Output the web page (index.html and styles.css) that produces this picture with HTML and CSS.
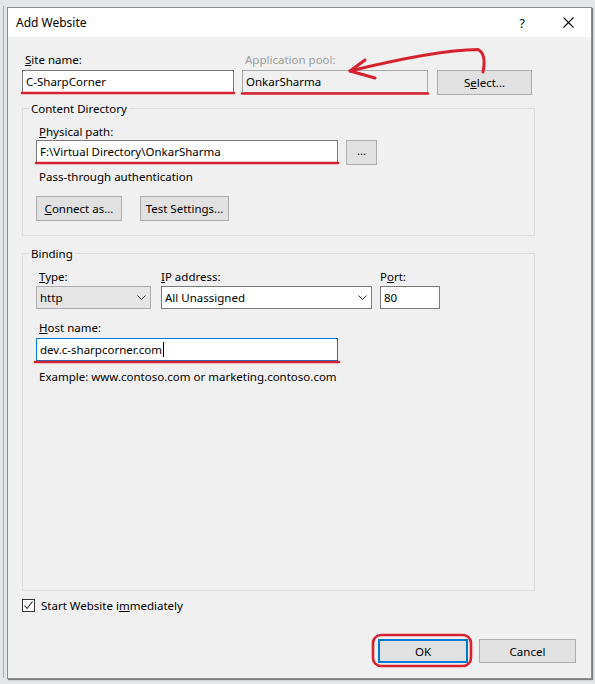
FILE: index.html
```html
<!DOCTYPE html>
<html lang="en">
<head>
<meta charset="utf-8">
<title>Add Website</title>
<link rel="stylesheet" href="styles.css">
</head>
<body>
<div class="backdrop-line"></div>
<div class="dialog">
  <div class="titlebar">
    <span class="title">Add Website</span>
    <span class="help">?</span>
    <svg class="close" width="11" height="11" viewBox="0 0 11 11"><path d="M0.5 0.5 L10.5 10.5 M10.5 0.5 L0.5 10.5" stroke="#000" stroke-width="1.1" fill="none"/></svg>
  </div>
  <div class="content">
    <div class="row1">
      <div class="lbl"><u>S</u>ite name:</div>
      <div class="lbl disabled">Application pool:</div>
      <div></div>
      <div class="field">C-SharpCorner</div>
      <div class="field readonly">OnkarSharma</div>
      <div class="btn">S<u>e</u>lect...</div>
    </div>

    <fieldset class="group content-dir">
      <legend>Content Directory</legend>
      <div class="lbl"><u>P</u>hysical path:</div>
      <div class="path-row">
        <div class="field path">F:\Virtual Directory\OnkarSharma</div>
        <div class="btn dots">...</div>
      </div>
      <div class="lbl note">Pass-through authentication</div>
      <div class="btn-row">
        <div class="btn connect"><u>C</u>onnect as...</div>
        <div class="btn test">Test Settings...</div>
      </div>
    </fieldset>

    <fieldset class="group binding">
      <legend>Binding</legend>
      <div class="bind-grid">
        <div class="lbl type-lbl"><u>T</u>ype:</div>
        <div class="lbl flush"><u>I</u>P address:</div>
        <div class="lbl flush">P<u>o</u>rt:</div>
        <div class="select grey"><span>http</span><svg width="9" height="5" viewBox="0 0 9 5"><path d="M0.5 0.5 L4.5 4.5 L8.5 0.5" stroke="#333" stroke-width="1" fill="none"/></svg></div>
        <div class="select"><span>All Unassigned</span><svg width="9" height="5" viewBox="0 0 9 5"><path d="M0.5 0.5 L4.5 4.5 L8.5 0.5" stroke="#333" stroke-width="1" fill="none"/></svg></div>
        <div class="field">80</div>
      </div>
      <div class="lbl host-lbl"><u>H</u>ost name:</div>
      <div class="field host focused">dev.c-sharpcorner.com<span class="caret"></span></div>
      <div class="lbl example">Example: www.contoso.com or marketing.contoso.com</div>
    </fieldset>

    <div class="check-row">
      <span class="checkbox"><svg width="11" height="11" viewBox="0 0 11 11"><path d="M1.5 5.5 L4 8.5 L9.5 1.5" stroke="#222" stroke-width="1.1" fill="none"/></svg></span>
      <span class="check-lbl">Start Website i<u>m</u>mediately</span>
    </div>

    <div class="actions">
      <div class="btn ok">OK</div>
      <div class="btn cancel">Cancel</div>
    </div>
  </div>
</div>

<svg class="annot" width="595" height="684" viewBox="0 0 595 684">
  <g stroke="#d6222e" fill="none" stroke-linecap="round" stroke-linejoin="round">
    <path d="M483 72 C485 62 485 53 478 49.5 C445 50 395 60 350 71" stroke-width="3"/>
    <path d="M365 60 L350 71 L375 78" stroke-width="3"/>
    <path d="M22 93 L234 93" stroke-width="2.6"/>
    <path d="M242 93.5 L428 93.5" stroke-width="2.6"/>
    <path d="M36 163 L338 163" stroke-width="2.6"/>
    <path d="M35 362 L339 362" stroke-width="2.6"/>
    <rect x="373" y="635" width="98" height="31" rx="8" ry="8" stroke-width="2.6"/>
  </g>
</svg>
</body>
</html>
```
FILE: styles.css
```css
* { box-sizing: border-box; }

html, body { margin: 0; padding: 0; }

body {
  position: relative;
  width: 595px;
  height: 684px;
  overflow: hidden;
  background: #e3e5e8;
  padding: 7px 3px 5px 7px;
  font-family: "Noto Sans", "Open Sans", sans-serif;
  font-size: 11.5px;
  color: #000;
}

.backdrop-line {
  position: absolute;
  left: 3px;
  top: 6px;
  width: 1px;
  height: 672px;
  background: #a9a9a9;
}

u { text-decoration: underline; text-underline-offset: 1px; }

.dialog {
  position: relative;
  width: 585px;
  height: 672px;
  border: 1px solid #8c8c8c;
  background: #f0f0f0;
  box-shadow: 1px 1px 1px rgba(0,0,0,.45);
  display: flex;
  flex-direction: column;
}

.titlebar {
  height: 29px;
  background: #fff;
  display: flex;
  align-items: center;
  padding-left: 8px;
  flex: none;
}
.title { font-size: 12px; flex: 1; }
.help { font-size: 13px; margin-right: 38px; }
.close { margin-right: 17px; }

.content {
  flex: 1;
  display: flex;
  flex-direction: column;
  padding: 15px 15px 15px 14px;
}

.lbl { line-height: 15px; height: 15px; padding-left: 3px; white-space: nowrap; }
.lbl.disabled { color: #9d9d9d; }
.lbl.flush { padding-left: 0; }

.row1 {
  display: grid;
  grid-template-columns: 212px 186px 96px;
  column-gap: 8px;
  row-gap: 3px;
}
.row1 > :nth-child(3n) { margin-left: 1px; }

.field {
  height: 23px;
  border: 1px solid #7a7a7a;
  background: #fff;
  padding-left: 3px;
  line-height: 21px;
  white-space: nowrap;
  overflow: hidden;
}
.field.readonly { background: #f0f0f0; border-color: #a8a8a8; }
.field.focused { border-color: #0078d7; }

.btn {
  height: 25px;
  border: 1px solid #adadad;
  background: #e1e1e1;
  display: flex;
  align-items: center;
  justify-content: center;
  white-space: nowrap;
}

.group {
  margin: 0;
  border: 1px solid #dcdcdc;
  padding: 0 0 0 13px;
  width: 513px;
  min-width: 0;
}
.group legend {
  padding: 0 2px;
  margin-left: -7px;
  line-height: 15px;
}

.content-dir { margin-top: 6px; padding-top: 8px; padding-bottom: 14px; }
.content-dir .lbl:first-of-type { margin-bottom: 1px; }

.path-row { display: flex; gap: 8px; align-items: flex-start; }
.field.path { width: 302px; }
.btn.dots { width: 31px; padding-bottom: 4px; }

.lbl.note { margin-top: 4px; }

.btn-row { display: flex; gap: 18px; margin-top: 12px; }
.btn.connect { width: 86px; }
.btn.test { width: 89px; }

.binding {
  margin-top: 10px;
  padding-top: 8px;
  flex: 1;
}

.bind-grid {
  display: grid;
  grid-template-columns: 115px 211px 58px;
  column-gap: 10px;
  row-gap: 2px;
}
.bind-grid > :nth-child(3n) { margin-left: -2px; }
.bind-grid .flush:first-of-type { padding-left: 0; }

.select {
  height: 23px;
  border: 1px solid #7a7a7a;
  background: #fff;
  display: flex;
  align-items: center;
  justify-content: space-between;
  padding: 0 4px 0 3px;
}
.select.grey { background: #e5e5e5; border-color: #acacac; }

.lbl.host-lbl { margin-top: 11px; margin-bottom: 3px; }
.field.host { width: 302px; display: flex; align-items: center; }
.caret { display: inline-block; width: 1px; height: 15px; background: #000; margin-left: 1px; }

.lbl.example { margin-top: 8px; }

.check-row {
  margin-top: 8px;
  height: 13px;
  display: flex;
  align-items: center;
  flex: none;
}
.checkbox {
  width: 13px;
  height: 13px;
  border: 1px solid #333;
  background: #fff;
  display: flex;
  align-items: center;
  justify-content: center;
}
.check-lbl { margin-left: 6px; line-height: 15px; }

.actions {
  margin-top: 27px;
  display: flex;
  justify-content: flex-end;
  gap: 11px;
  flex: none;
}
.btn.ok {
  width: 90px;
  height: 24px;
  border-color: #0078d7;
  box-shadow: inset 0 0 0 1px #0078d7;
}
.btn.cancel { width: 97px; height: 24px; }

.annot {
  position: absolute;
  left: 0;
  top: 0;
  pointer-events: none;
}
```
